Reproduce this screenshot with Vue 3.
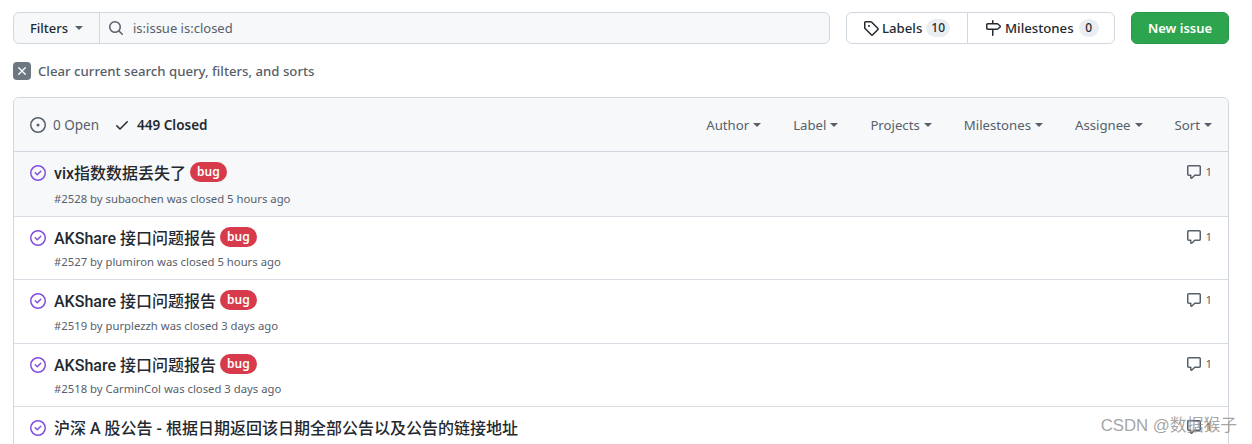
<script setup>
const filters = ['Author', 'Label', 'Projects', 'Milestones', 'Assignee', 'Sort']
const issues = [
  { title: 'vix指数数据丢失了', meta: '#2528 by subaochen was closed 5 hours ago', bug: true, comments: 1, hi: true, h: 65 },
  { title: 'AKShare 接口问题报告', meta: '#2527 by plumiron was closed 5 hours ago', bug: true, comments: 1, h: 63 },
  { title: 'AKShare 接口问题报告', meta: '#2519 by purplezzh was closed 3 days ago', bug: true, comments: 1, h: 64 },
  { title: 'AKShare 接口问题报告', meta: '#2518 by CarminCol was closed 3 days ago', bug: true, comments: 1, h: 63 },
  { title: '沪深 A 股公告 - 根据日期返回该日期全部公告以及公告的链接地址', meta: '', bug: false, comments: 1, h: 40 }
]
</script>

<template>
  <div class="page">
    <div class="top">
      <div class="search">
        <div class="filters">Filters <span class="caret"></span></div>
        <div class="input">
          <svg class="ic-search" viewBox="0 0 16 16" width="16" height="16"><path d="M10.68 11.74a6 6 0 0 1-7.922-8.982 6 6 0 0 1 8.982 7.922l3.04 3.04a.749.749 0 0 1-.326 1.275.749.749 0 0 1-.734-.215ZM11.5 7a4.499 4.499 0 1 0-8.997 0A4.499 4.499 0 0 0 11.5 7Z"/></svg>
          <span>is:issue is:closed</span>
        </div>
      </div>
      <div class="links">
        <div class="link labels">
          <svg viewBox="0 0 16 16" width="16" height="16"><path d="M1 7.775V2.75C1 1.784 1.784 1 2.75 1h5.025c.464 0 .91.184 1.238.513l6.25 6.25a1.75 1.75 0 0 1 0 2.474l-5.026 5.026a1.75 1.75 0 0 1-2.474 0l-6.25-6.25A1.752 1.752 0 0 1 1 7.775Zm1.5 0c0 .066.026.13.073.177l6.25 6.25a.25.25 0 0 0 .354 0l5.025-5.025a.25.25 0 0 0 0-.354l-6.25-6.25a.25.25 0 0 0-.177-.073H2.75a.25.25 0 0 0-.25.25ZM6 5a1 1 0 1 1 0 2 1 1 0 0 1 0-2Z"/></svg>
          Labels <span class="count">10</span>
        </div>
        <div class="link miles">
          <svg viewBox="0 0 16 16" width="16" height="16"><path d="M7.75 0a.75.75 0 0 1 .75.75V3h3.634c.414 0 .814.147 1.13.414l2.07 1.75a1.75 1.75 0 0 1 0 2.672l-2.07 1.75a1.75 1.75 0 0 1-1.13.414H8.5v5.25a.75.75 0 0 1-1.5 0V10H2.75A1.75 1.75 0 0 1 1 8.25v-3.5C1 3.784 1.784 3 2.75 3H7V.75A.75.75 0 0 1 7.75 0Zm4.384 8.5a.25.25 0 0 0 .161-.06l2.07-1.75a.248.248 0 0 0 0-.38l-2.07-1.75a.25.25 0 0 0-.161-.06H2.75a.25.25 0 0 0-.25.25v3.5c0 .138.112.25.25.25h9.384Z"/></svg>
          Milestones <span class="count">0</span>
        </div>
      </div>
      <div class="new">New issue</div>
    </div>

    <div class="clear">
      <span class="clear-x">
        <svg viewBox="0 0 16 16" width="14" height="14"><path d="M3.72 3.72a.75.75 0 0 1 1.06 0L8 6.94l3.22-3.22a.749.749 0 0 1 1.275.326.749.749 0 0 1-.215.734L9.06 8l3.22 3.22a.749.749 0 0 1-.326 1.275.749.749 0 0 1-.734-.215L8 9.06l-3.22 3.22a.751.751 0 0 1-1.042-.018.751.751 0 0 1-.018-1.042L6.94 8 3.72 4.78a.75.75 0 0 1 0-1.06Z"/></svg>
      </span>
      Clear current search query, filters, and sorts
    </div>

    <div class="box">
      <div class="head">
        <div class="states">
          <span class="state open">
            <svg viewBox="0 0 16 16" width="16" height="16"><path d="M8 9.5a1.5 1.5 0 1 0 0-3 1.5 1.5 0 0 0 0 3Z"/><path d="M8 0a8 8 0 1 1 0 16A8 8 0 0 1 8 0ZM1.5 8a6.5 6.5 0 1 0 13 0 6.5 6.5 0 0 0-13 0Z"/></svg>
            0 Open
          </span>
          <span class="state closed">
            <svg viewBox="0 0 16 16" width="16" height="16"><path d="M13.78 4.22a.75.75 0 0 1 0 1.06l-7.25 7.25a.75.75 0 0 1-1.06 0L2.22 9.28a.751.751 0 0 1 .018-1.042.751.751 0 0 1 1.042-.018L6 10.94l6.72-6.72a.75.75 0 0 1 1.06 0Z"/></svg>
            449 Closed
          </span>
        </div>
        <div class="sorts">
          <span v-for="f in filters" :key="f" class="sort">{{ f }} <span class="caret"></span></span>
        </div>
      </div>
      <div
        v-for="(it, i) in issues"
        :key="i"
        class="row"
        :class="{ hi: it.hi }"
        :style="{ height: it.h + 'px' }"
      >
        <svg class="done" viewBox="0 0 16 16" width="16" height="16"><path d="M11.28 6.78a.75.75 0 0 0-1.06-1.06L7.25 8.69 5.78 7.22a.75.75 0 0 0-1.06 1.06l2 2a.75.75 0 0 0 1.06 0l3.5-3.5Z"/><path d="M16 8A8 8 0 1 1 0 8a8 8 0 0 1 16 0Zm-1.5 0a6.5 6.5 0 1 0-13 0 6.5 6.5 0 0 0 13 0Z"/></svg>
        <div class="main">
          <div class="title">{{ it.title }}<span v-if="it.bug" class="bug">bug</span></div>
          <div v-if="it.meta" class="meta">{{ it.meta }}</div>
        </div>
        <div class="comments">
          <svg viewBox="0 0 16 16" width="16" height="16"><path d="M1 2.75C1 1.784 1.784 1 2.75 1h10.5c.966 0 1.75.784 1.75 1.75v7.5A1.75 1.75 0 0 1 13.25 12H9.06l-2.573 2.573A1.458 1.458 0 0 1 4 13.543V12H2.75A1.75 1.75 0 0 1 1 10.25Zm1.75-.25a.25.25 0 0 0-.25.25v7.5c0 .138.112.25.25.25h2a.75.75 0 0 1 .75.75v2.19l2.72-2.72a.749.749 0 0 1 .53-.22h4.5a.25.25 0 0 0 .25-.25v-7.5a.25.25 0 0 0-.25-.25Z"/></svg>
          <span>{{ it.comments }}</span>
        </div>
      </div>
    </div>
    <div class="mark">CSDN @数据猴子</div>
  </div>
</template>

<style>
html, body { margin: 0; background: #fff; overflow: hidden; }
</style>

<style scoped>
.page {
  position: relative;
  width: 1252px;
  height: 444px;
  overflow: hidden;
  box-sizing: border-box;
  padding: 12px 23px 0 13px;
  font-family: "Noto Sans", "Noto Sans CJK SC", sans-serif;
  font-size: 13.2px;
  color: #24292f;
  background: #fff;
}
svg { fill: currentColor; display: block; flex: none; }
.top { display: flex; height: 32px; width: 1216px; }
.search {
  display: flex;
  width: 817px;
  box-sizing: border-box;
  border: 1px solid #d0d7de;
  border-radius: 6px;
  background: #f6f8fa;
  margin-right: 16px;
}
.filters {
  width: 86px;
  box-sizing: border-box;
  display: flex;
  align-items: center;
  justify-content: center;
  gap: 7px;
  font-weight: 500;
  font-size: 13px;
  border-right: 1px solid #d0d7de;
}
.filters .caret { color: #57606a; }
.caret {
  display: inline-block;
  width: 0;
  height: 0;
  border-style: solid;
  border-width: 4px 4px 0;
  border-color: currentColor transparent transparent;
}
.input {
  display: flex;
  align-items: center;
  gap: 9px;
  padding-left: 8px;
  color: #57606a;
  font-size: 13px;
}
.ic-search { color: #57606a; }
.links {
  display: flex;
  width: 269px;
  box-sizing: border-box;
  border: 1px solid #d0d7de;
  border-radius: 6px;
  margin-right: 16px;
  font-weight: 500;
}
.link { display: flex; align-items: center; gap: 3px; box-sizing: border-box; }
.labels { width: 121px; padding-left: 16px; border-right: 1px solid #d0d7de; }
.miles { flex: 1; padding-left: 17px; gap: 4px; }
.count {
  min-width: 20px;
  box-sizing: border-box;
  padding: 0 5px;
  margin-left: 1px;
  height: 18px;
  line-height: 18px;
  border-radius: 9px;
  text-align: center;
  font-size: 12px;
  background: #eaeef2;
}
.new {
  width: 98px;
  box-sizing: border-box;
  border-radius: 6px;
  background: #2da44e;
  border: 1px solid #2c974b;
  color: #fff;
  font-weight: 600;
  font-size: 13px;
  display: flex;
  align-items: center;
  justify-content: center;
}
.clear {
  display: flex;
  align-items: center;
  gap: 7px;
  height: 18px;
  margin-top: 18px;
  color: #57606a;
  font-weight: 500;
}
.clear-x {
  width: 18px;
  height: 18px;
  border-radius: 4px;
  background: #6e7781;
  color: #fff;
  display: flex;
  align-items: center;
  justify-content: center;
}
.box {
  margin-top: 17px;
  width: 1216px;
  box-sizing: border-box;
  border: 1px solid #d0d7de;
  border-radius: 6px 6px 0 0;
}
.head {
  height: 54px;
  box-sizing: border-box;
  background: #f6f8fa;
  border-bottom: 1px solid #d0d7de;
  border-radius: 6px 6px 0 0;
  display: flex;
  align-items: center;
  justify-content: space-between;
  padding: 0 16px;
}
.states { display: flex; gap: 15px; font-size: 13.5px; }
.state { display: flex; align-items: center; gap: 7px; }
.open { color: #57606a; }
.closed { font-weight: 600; }
.sorts { display: flex; gap: 32px; color: #57606a; }
.sort { display: flex; align-items: center; gap: 4px; }
.row {
  display: flex;
  box-sizing: border-box;
  padding: 12px 16px 8px 16px;
  border-bottom: 1px solid #d8dee4;
}
.row:last-child { border-bottom: 0; }
.hi { background: #f6f8fa; }
.done { color: #8250df; margin-top: 1px; }
.main { flex: 1; margin-left: 8px; display: flex; flex-direction: column; }
.title {
  font-family: Roboto, "Noto Sans CJK SC", sans-serif;
  font-size: 16px;
  font-weight: 500;
  line-height: 20px;
  color: #24292f;
  display: flex;
  align-items: flex-start;
}
.bug {
  font-family: "Noto Sans", sans-serif;
  margin-left: 4px;
  margin-top: -2px;
  height: 20px;
  line-height: 20px;
  padding: 0 7px;
  border-radius: 10px;
  background: #d73a4a;
  color: #fff;
  font-size: 12px;
  font-weight: 600;
}
.meta { margin-top: auto; font-size: 11.3px; line-height: 18px; color: #57606a; }
.comments {
  display: flex;
  align-items: flex-start;
  gap: 3px;
  font-size: 11.5px;
  line-height: 16px;
  color: #57606a;
  margin-left: 1px;
}
.mark {
  position: absolute;
  right: 15px;
  top: 416px;
  font-family: "Liberation Sans", "Noto Sans CJK SC", sans-serif;
  font-size: 16.8px;
  line-height: 20px;
  color: rgba(140, 140, 140, 0.8);
}
</style>
